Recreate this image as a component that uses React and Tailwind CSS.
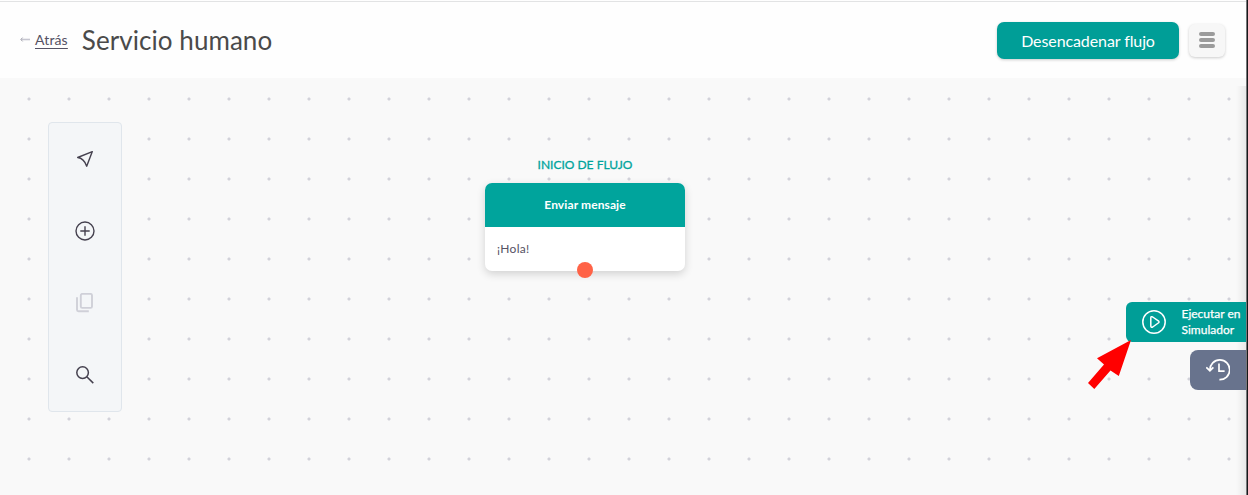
import React from "react";

function BackLink() {
  return (
    <a className="flex h-5 items-center text-[14px] leading-5 tracking-[0.15px] text-[#555264]" href="#back">
      <svg className="mr-[5px] h-[6px] w-[10px]" viewBox="0 0 10 6" fill="none">
        <path d="M1 2.5H10" stroke="#c6c6d0" strokeWidth="1.6" />
        <path d="M2.6 0.6L0.8 2.5L2.6 4.4" stroke="#a5a5af" strokeWidth="1" />
      </svg>
      <span className="underline decoration-1 underline-offset-[3px]">Atrás</span>
    </a>
  );
}

function Header() {
  return (
    <header className="flex h-[78px] shrink-0 items-start justify-between border-t border-[#e2e3e4] bg-[#fefefe] pl-5 pr-[23px] mt-px">
      <div className="flex items-center pt-[20px]">
        <BackLink />
        <h1 className="ml-[14px] text-[26px] leading-9 tracking-[0.06px] text-[#4a4a4a]">Servicio humano</h1>
      </div>
      <div className="flex items-center gap-[10px] pt-[20px]">
        <button className="h-[37px] w-[182px] rounded-[7px] bg-[#009e97] text-[16px] leading-5 tracking-[-0.1px] text-white shadow-[0_1px_3px_rgba(0,0,0,0.2)]">
          Desencadenar flujo
        </button>
        <button className="flex h-[33px] w-[36px] flex-col items-center justify-center gap-[2px] rounded-[6px] bg-[#f7f7f7] pb-[2px] shadow-[0_1px_3px_rgba(0,0,0,0.2)]">
          <span className="h-1 w-4 rounded-[2px] bg-[#9b9b9b]" />
          <span className="h-1 w-4 rounded-[2px] bg-[#9b9b9b]" />
          <span className="h-1 w-4 rounded-[2px] bg-[#9b9b9b]" />
        </button>
      </div>
    </header>
  );
}

function Toolbar() {
  return (
    <aside className="ml-12 mt-11 flex h-[290px] w-[74px] flex-col items-center rounded-[4px] border border-[#e0e6ec] bg-[#f4f6f8] text-[#45414f]">
      <button className="flex h-[72px] w-full items-center justify-center">
        <svg className="h-5 w-5" viewBox="0 0 20 20" fill="none" stroke="currentColor" strokeWidth="1.4" strokeLinejoin="round">
          <path d="M17.3 2.6L2.7 8.5Q8.9 9.2 11.7 17.2Z" />
        </svg>
      </button>
      <button className="flex h-[72px] w-full items-center justify-center">
        <svg className="h-5 w-5" viewBox="0 0 20 20" fill="none" stroke="currentColor" strokeWidth="1.4">
          <circle cx="10" cy="10" r="9" />
          <path d="M10 5.3V14.7M5.3 10H14.7" />
        </svg>
      </button>
      <button className="flex h-[72px] w-full items-center justify-center">
        <svg className="h-5 w-5" viewBox="0 0 20 20" fill="none" stroke="#cfd0d8" strokeWidth="1.9">
          <rect x="5.8" y="0.9" width="11.2" height="14" rx="1.5" />
          <path d="M2 4.3V16.7Q2 18.2 3.5 18.2H13.8" />
        </svg>
      </button>
      <button className="flex h-[72px] w-full items-center justify-center">
        <svg className="h-5 w-5" viewBox="0 0 20 20" fill="none" stroke="currentColor" strokeWidth="1.5">
          <circle cx="7.6" cy="7.6" r="5.8" />
          <path d="M11.8 11.8L18.3 18.1" />
        </svg>
      </button>
    </aside>
  );
}

function FlowNode() {
  return (
    <section className="absolute left-[485px] top-[79px] w-[200px]">
      <div className="h-[26px] text-center text-[12px] leading-4 text-[#00a49c] [-webkit-text-stroke:0.3px]">
        INICIO DE FLUJO
      </div>
      <div className="overflow-hidden rounded-[7px] bg-white shadow-[0_3px_8px_rgba(0,0,0,0.16)]">
        <div className="flex h-11 items-center justify-center bg-[#00a49c] text-[12px] font-bold tracking-[0.1px] text-white">
          Enviar mensaje
        </div>
        <div className="flex h-11 items-center px-3 text-[12px] tracking-[0.3px] text-[#555264]">¡Hola!</div>
      </div>
      <span className="absolute -bottom-[7px] left-[92px] h-4 w-4 rounded-full bg-[#ff6347]" />
    </section>
  );
}

function SideActions() {
  return (
    <div className="absolute right-[2px] top-[224px] flex flex-col items-end gap-2">
      <button className="flex h-10 w-[120px] items-center rounded-l-[6px] bg-[#009e97] pl-4 text-left text-[12px] leading-4 text-white">
        <svg className="mr-[15.5px] h-6 w-6 shrink-0" viewBox="0 0 24 24" fill="none" stroke="white" strokeWidth="1.5" strokeLinejoin="round">
          <circle cx="12" cy="12" r="11.2" />
          <path d="M8.8 8.1Q8.8 5.9 10.7 7L16.3 10.8Q17.7 12 16.3 13L10.7 17Q8.8 18 8.8 15.8Z" />
        </svg>
        <span className="whitespace-nowrap [-webkit-text-stroke:0.25px]">Ejecutar en<br />Simulador</span>
      </button>
      <button className="flex h-10 w-14 items-center rounded-l-[8px] bg-[#68738d] pl-4">
        <svg className="h-6 w-6" viewBox="0 0 24 24" fill="none" stroke="white" strokeWidth="1.7">
          <path d="M3.9 12A9.9 9.9 0 1 1 13.4 21.7" />
          <path d="M0.3 9.3L3.9 12.7L7.4 9.3" />
          <path d="M13 5.5V13.2H18.6" />
        </svg>
      </button>
    </div>
  );
}

function Pointer() {
  return (
    <svg className="absolute left-[1086px] top-[260px] h-[52px] w-[46px]" viewBox="0 0 46 52">
      <path d="M45 2L11 20.3L18 26.5L2 45L8.3 51L24.5 32.5L32.8 38Z" fill="#ff0000" />
    </svg>
  );
}

export default function App() {
  return (
    <div
      className="flex h-[495px] w-[1248px] flex-col overflow-hidden bg-[#fefefe]"
      style={{ fontFamily: 'Lato, "Open Sans", sans-serif' }}
    >
      <div className="relative flex h-full flex-col">
        <Header />
        <main className="relative -mt-px flex grow items-start overflow-hidden bg-[#f9f9f9] bg-[radial-gradient(circle,#d2d2da_1.2px,transparent_1.9px)] bg-size-[40px_40px] bg-position-[9px_1px]">
          <Toolbar />
          <FlowNode />
          <div className="absolute bottom-0 right-0 top-2 w-3 bg-gradient-to-r from-transparent to-black/8" />
          <SideActions />
          <Pointer />
        </main>
        <div className="absolute inset-y-0 right-0 w-[2px] border-l border-[#77777a] bg-[#17181a]" />
      </div>
    </div>
  );
}
